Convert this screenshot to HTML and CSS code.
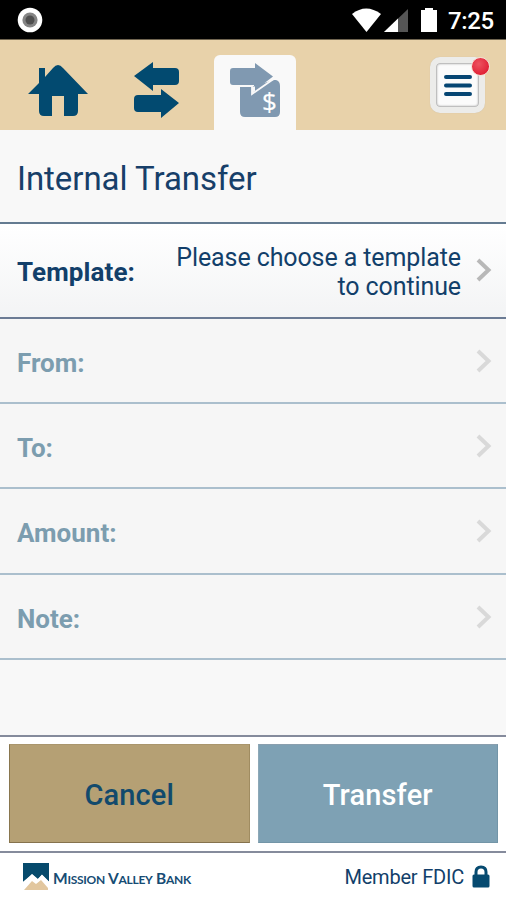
FILE: index.html
```html
<!DOCTYPE html>
<html lang="en">
<head>
<meta charset="utf-8">
<title>Internal Transfer</title>
<link rel="stylesheet" href="styles.css">
</head>
<body>
<div class="app">
  <div class="status">
    <svg class="record" width="26" height="26" viewBox="0 0 26 26"><circle cx="13" cy="13" r="12.3" fill="#fff"/><circle cx="13" cy="13" r="7.6" fill="#858585"/><circle cx="13" cy="13" r="4.5" fill="#505050"/></svg>
    <div class="status-right">
      <svg width="86" height="26" viewBox="0 0 86 26"><path d="M0 7Q14-4 29 7L14.500 25Z" fill="#fff"/><path d="M32 25L56 2V25Z" fill="#555"/><path d="M32 25L46 11.500V25Z" fill="#fff"/><path d="M69 3h4V1h8v2h4v22H69Z" fill="#fff"/></svg>
      <span class="time">7:25</span>
    </div>
  </div>
  <nav class="nav">
    <svg class="home" width="60" height="53" viewBox="0 0 60 53"><path d="M0 30L11 19V4h6v9L25 4Q30-2 35 4L60 30H50V47Q50 52 45 52H36V32H24V52H16Q11 52 11 47V30Z" fill="#024a70"/></svg>
    <svg class="swap" width="46" height="58" viewBox="0 0 46 58"><path d="M0 15L19 1V7H41Q45 7 45 11V20Q45 24 41 24H19V30Z" fill="#024a70"/><path d="M45 42L27 28V34H4Q0 34 0 38V47Q0 51 4 51H27V57Z" fill="#024a70"/></svg>
    <div class="tab">
      <svg width="52" height="56" viewBox="0 0 52 56"><path d="M10 23H24L44 17H46Q50 18 50 23V49Q50 54 45 54H15Q10 54 10 49Z" fill="#8099b1"/><path d="M3 5H25V0L43 13.500L24 28V22H3Q0 22 0 19V8Q0 5 3 5Z" fill="#8099b1"/><path d="M7 23H22V31L45 15" fill="none" stroke="#f9f9f9" stroke-width="1.800"/><path d="M22 23.500H25V28L22 30Z" fill="#f9f9f9"/><text x="32" y="47.500" class="dollar">$</text></svg>
    </div>
    <div class="menu">
      <svg width="28" height="24" viewBox="0 0 28 24"><path d="M2 3H26M2 11.500H26M2 20H26" stroke="#064673" stroke-width="4" stroke-linecap="round"/></svg>
      <span class="badge"></span>
    </div>
  </nav>
  <h1 class="title">Internal Transfer</h1>
  <div class="row row-active">
    <span class="label">Template:</span>
    <span class="value">Please choose a template<br>to continue</span>
    <svg class="chev" width="16" height="24" viewBox="0 0 16 24"><path d="M2 2L12.500 12L2 22" fill="none" stroke="#b8b8b8" stroke-width="4"/></svg>
  </div>
  <div class="row"><span class="label">From:</span><svg class="chev" width="16" height="24" viewBox="0 0 16 24"><path d="M2 2L12.500 12L2 22" fill="none" stroke="#d9d9d9" stroke-width="4"/></svg></div>
  <div class="row"><span class="label">To:</span><svg class="chev" width="16" height="24" viewBox="0 0 16 24"><path d="M2 2L12.500 12L2 22" fill="none" stroke="#d9d9d9" stroke-width="4"/></svg></div>
  <div class="row row-tall"><span class="label">Amount:</span><svg class="chev" width="16" height="24" viewBox="0 0 16 24"><path d="M2 2L12.500 12L2 22" fill="none" stroke="#d9d9d9" stroke-width="4"/></svg></div>
  <div class="row"><span class="label">Note:</span><svg class="chev" width="16" height="24" viewBox="0 0 16 24"><path d="M2 2L12.500 12L2 22" fill="none" stroke="#d9d9d9" stroke-width="4"/></svg></div>
  <div class="space"></div>
  <div class="actions">
    <button class="btn cancel">Cancel</button>
    <button class="btn transfer">Transfer</button>
  </div>
  <footer class="footer">
    <svg class="mark" width="26" height="28" viewBox="0 0 26 28"><path d="M0 0H26V19L19 12L15 16L9 11L0 20Z" fill="#064a6c"/><path d="M1 27L9 18L13 21L18 17L25 25V27Z" fill="#e2c79f"/><path d="M0 20L9 12.500L14.500 18L19 13L26 20" fill="none" stroke="#fff" stroke-width="2"/></svg>
    <span class="brand">M<small>ISSION</small> V<small>ALLEY</small> B<small>ANK</small></span>
    <span class="member">Member FDIC</span>
    <svg class="lock" width="18" height="23" viewBox="0 0 18 23"><path d="M4 11V7Q4 2 9 2T14 7V11" fill="none" stroke="#064a70" stroke-width="3"/><rect x="0.500" y="9.500" width="17" height="13" rx="1.500" fill="#064a70"/></svg>
  </footer>
</div>
</body>
</html>
```
FILE: styles.css
```css
* { box-sizing: border-box; }
body { margin: 0; font-family: Roboto, "Liberation Sans", sans-serif; color: #123f6a; }
svg { display: block; flex: none; }
.app { width: 506px; height: 900px; display: flex; flex-direction: column; background: #f8f8f8; overflow: hidden; }
.app > * { flex: none; }
.status { height: 40px; background: #000; border-bottom: 1px solid #706550; display: flex; justify-content: space-between; padding: 7px 10px 0 17px; }
.status-right { display: flex; }
.time { color: #fff; font-size: 24px; font-weight: 500; line-height: 28px; margin-left: 10px; width: 48px; white-space: nowrap; letter-spacing: -.4px; }
.nav { height: 90px; background: #e8d2aa; display: flex; align-items: flex-start; padding-left: 28px; }
.home { margin-top: 24px; }
.swap { margin: 21px 0 0 46px; }
.tab { width: 82px; height: 75px; margin: 15px 0 0 34px; border-radius: 6px 6px 0 0; background: #f9f9f9; padding: 8px 0 0 16px; }
.dollar { font: 400 26px "Open Sans", sans-serif; fill: #fff; stroke: #fff; stroke-width: .2px; }
.menu { position: relative; width: 55px; height: 56px; margin: 17px 0 0 134px; border-radius: 10px; border: 6px solid #ececea; background: #fbfbfb; box-shadow: inset 0 0 2px 1px #aaa, 0 0 1px #c7baa2; padding: 11px 0 0 8px; }
.badge { position: absolute; left: 35px; top: -6px; width: 19px; height: 19px; border: 1px solid #f5dfd4; border-radius: 50%; background: radial-gradient(circle at 40% 35%, #ed5360, #e12338 70%); }
.title { height: 94px; margin: 0; padding: 0 17px 4px; border-bottom: 2px solid #647b91; font-size: 33px; font-weight: 400; line-height: 97px; letter-spacing: -.05px; color: #173f69; }
.row { height: 85px; display: flex; align-items: center; padding: 4px 14px 0 17px; border-bottom: 2px solid #abbfcd; background: #f6f6f6; color: #7c9daf; }
.row-tall { height: 86px; }
.row-active { height: 95px; padding-top: 3px; border-color: #6b7b94; background: linear-gradient(#fff, #f3f4f5); color: #123f6a; }
.label { font-size: 26px; font-weight: 700; white-space: nowrap; }
.row-active .label { letter-spacing: .1px; }
.value { margin-left: auto; margin-right: 15px; text-align: right; font-size: 25px; line-height: 29px; letter-spacing: -.1px; white-space: nowrap; }
.chev { margin-left: auto; position: relative; top: -2px; }
.value + .chev { margin-left: 0; }
.space { height: 75px; background: #f8f8f8; }
.actions { height: 118px; display: flex; gap: 8px; background: #fff; padding: 7px 8px 8px 9px; border-top: 2px solid #858b9c; border-bottom: 2px solid #858b9c; }
.btn { flex: 1; height: 99px; border: 1px solid; border-radius: 0; font: 500 29px Roboto, sans-serif; padding: 2px 0 0; }
.cancel { background: #b5a074; border-color: #aa966d #a08c61 #85724d #89764e; color: #124a6c; letter-spacing: .15px; }
.transfer { background: #7ea1b4; border-color: #8a9fae #7295a8 #7395a7 #8da8b7; color: #fff; letter-spacing: .15px; }
.footer { flex: 1 0 0 !important; background: #fff; display: flex; align-items: flex-start; padding: 10px 16px 0 23px; }
.brand { margin: 5px 0 0 4px; font: 700 15.5px/20px Lato, sans-serif; letter-spacing: -.27px; color: #164c74; white-space: nowrap; }
.brand small { font-size: 12px; }
.member { margin: 2px 8px 0 auto; font-size: 20px; line-height: 24px; letter-spacing: -.2px; white-space: nowrap; }
.lock { margin-top: 2px; }
```
